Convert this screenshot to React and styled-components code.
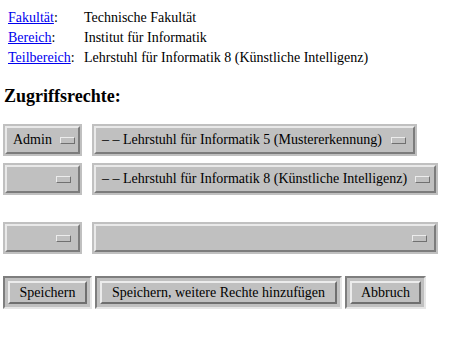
import React from "react"
import styled, { createGlobalStyle } from "styled-components"

const GlobalStyle = createGlobalStyle`
  body {
    margin: 0;
    background: #ffffff;
    font-family: "Liberation Serif", "Times New Roman", serif;
    font-size: 14px;
    color: #000000;
  }
`

const Page = styled.div`
  padding: 8px 0 0 3px;
`

const InfoTable = styled.div`
  display: grid;
  grid-template-columns: 76px auto;
  padding-left: 5px;
  line-height: 20px;
`

const InfoLink = styled.span`
  a {
    color: #0000ee;
    text-decoration: underline;
  }
`

const Heading = styled.h2`
  margin: 17px 0 0 1px;
  font-size: 18px;
  font-weight: bold;
  line-height: 22px;
`

const Rows = styled.div`
  display: flex;
  flex-direction: column;
  margin-top: 17px;
`

const Row = styled.div`
  display: flex;
  gap: 10px;
  margin-bottom: ${p => p.$space}px;
`

const Select = styled.div`
  box-sizing: border-box;
  width: ${p => p.$width}px;
  height: 32px;
  border: 2px solid #c0c0c0;
  background: #c0c0c0;
`

const SelectFace = styled.div`
  box-sizing: border-box;
  height: 100%;
  display: flex;
  align-items: center;
  justify-content: space-between;
  padding: 0 7px 0 6px;
  border: 2px solid;
  border-color: #e9e9e9 #7c7c7c #7c7c7c #e9e9e9;
  background: #c0c0c0;
  white-space: nowrap;
`

const Indicator = styled.span`
  box-sizing: border-box;
  display: block;
  width: 15px;
  height: 7px;
  margin-left: 8px;
  border: 1px solid;
  border-color: #ececec #707070 #707070 #ececec;
  background: #c0c0c0;
  flex-shrink: 0;
`

const ButtonBar = styled.div`
  display: flex;
  gap: 3px;
`

const ButtonFrame = styled.div`
  box-sizing: border-box;
  width: ${p => p.$width}px;
  height: 33px;
  padding: 3px;
  border: 2px solid;
  border-color: #7e7e7e #e6e6e6 #e6e6e6 #7e7e7e;
  background: #c0c0c0;
  display: flex;
`

const Button = styled.div`
  box-sizing: border-box;
  flex: 1;
  display: flex;
  align-items: center;
  justify-content: center;
  border: 2px solid;
  border-color: #ececec #6f6f6f #6f6f6f #ececec;
  background: #c0c0c0;
  white-space: nowrap;
`

const DropDown = ({ width, label }) => (
  <Select $width={width}>
    <SelectFace>
      <span>{label}</span>
      <Indicator />
    </SelectFace>
  </Select>
)

export default function App() {
  return (
    <Page>
      <GlobalStyle />
      <InfoTable>
        <InfoLink><a href="#">Fakultät</a>:</InfoLink>
        <span>Technische Fakultät</span>
        <InfoLink><a href="#">Bereich</a>:</InfoLink>
        <span>Institut für Informatik</span>
        <InfoLink><a href="#">Teilbereich</a>:</InfoLink>
        <span>Lehrstuhl für Informatik 8 (Künstliche Intelligenz)</span>
      </InfoTable>
      <Heading>Zugriffsrechte:</Heading>
      <Rows>
        <Row $space={7}>
          <DropDown width={79} label="Admin" />
          <DropDown width={325} label="– – Lehrstuhl für Informatik 5 (Mustererkennung)" />
        </Row>
        <Row $space={27}>
          <DropDown width={79} label="" />
          <DropDown width={346} label="– – Lehrstuhl für Informatik 8 (Künstliche Intelligenz)" />
        </Row>
        <Row $space={22}>
          <DropDown width={79} label="" />
          <DropDown width={346} label="" />
        </Row>
        <ButtonBar>
          <ButtonFrame $width={89}><Button>Speichern</Button></ButtonFrame>
          <ButtonFrame $width={247}><Button>Speichern, weitere Rechte hinzufügen</Button></ButtonFrame>
          <ButtonFrame $width={81}><Button>Abbruch</Button></ButtonFrame>
        </ButtonBar>
      </Rows>
    </Page>
  )
}
